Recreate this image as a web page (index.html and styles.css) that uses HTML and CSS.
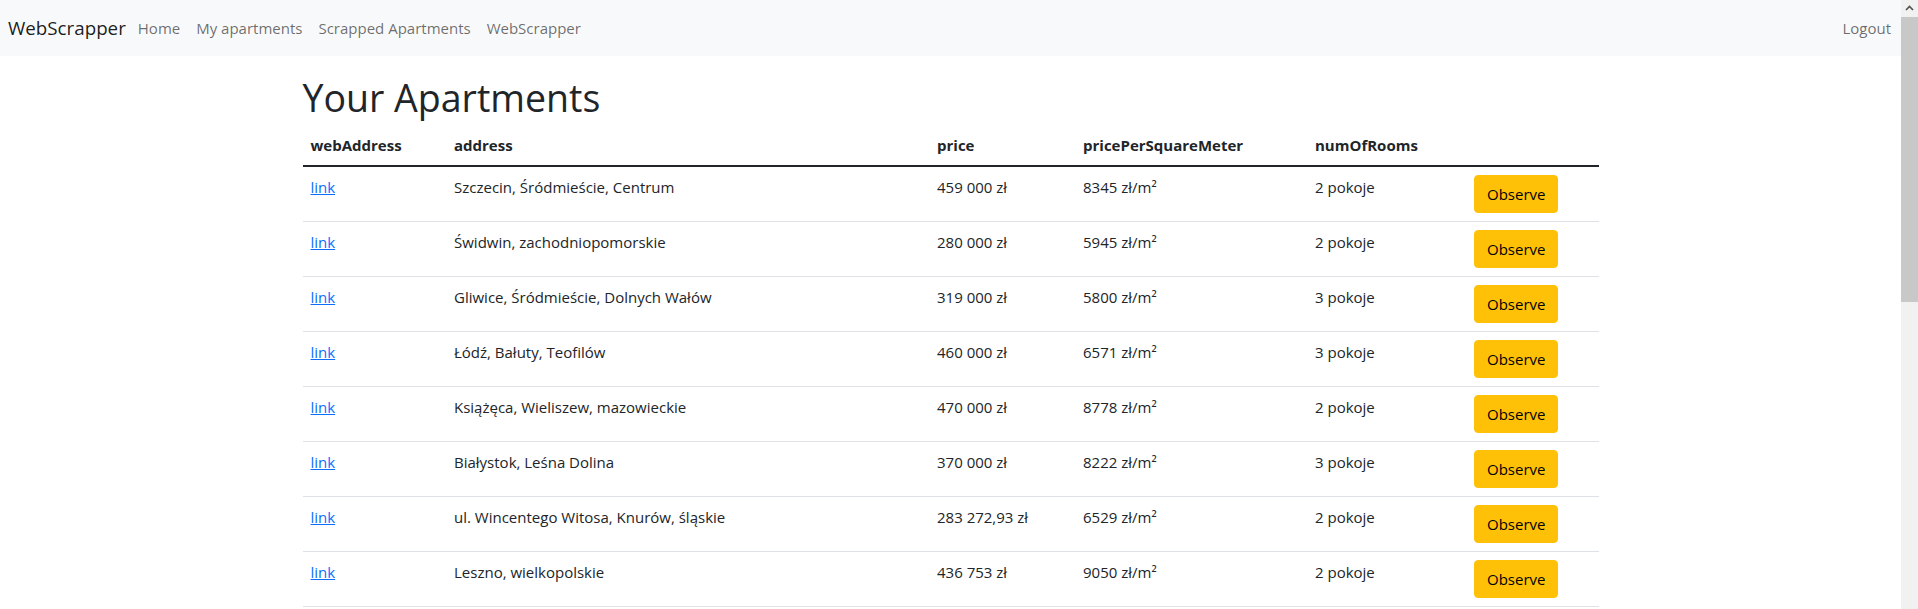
FILE: index.html
```html
<!DOCTYPE html>
<html lang="pl">
<head>
<meta charset="utf-8">
<title>WebScrapper</title>
<link rel="stylesheet" href="styles.css">
</head>
<body>
<div class="page">
  <nav class="navbar">
    <a class="brand" href="#">WebScrapper</a>
    <ul class="nav-list">
      <li><a class="nav-link" href="#">Home</a></li>
      <li><a class="nav-link" href="#">My apartments</a></li>
      <li><a class="nav-link" href="#">Scrapped Apartments</a></li>
      <li><a class="nav-link" href="#">WebScrapper</a></li>
    </ul>
    <ul class="nav-list nav-right">
      <li><a class="nav-link" href="#">Logout</a></li>
    </ul>
  </nav>
  <div class="container">
    <main class="main">
      <h1 class="title">Your Apartments</h1>
      <table class="table">
        <colgroup>
          <col class="c-web"><col class="c-addr"><col class="c-price"><col class="c-ppsm"><col class="c-rooms"><col class="c-act">
        </colgroup>
        <thead>
          <tr><th>webAddress</th><th>address</th><th>price</th><th>pricePerSquareMeter</th><th>numOfRooms</th><th></th></tr>
        </thead>
        <tbody>
          <tr><td><a class="link" href="#">link</a></td><td>Szczecin, Śródmieście, Centrum</td><td>459 000 zł</td><td>8345 zł/m²</td><td>2 pokoje</td><td><button class="btn">Observe</button></td></tr>
          <tr><td><a class="link" href="#">link</a></td><td>Świdwin, zachodniopomorskie</td><td>280 000 zł</td><td>5945 zł/m²</td><td>2 pokoje</td><td><button class="btn">Observe</button></td></tr>
          <tr><td><a class="link" href="#">link</a></td><td>Gliwice, Śródmieście, Dolnych Wałów</td><td>319 000 zł</td><td>5800 zł/m²</td><td>3 pokoje</td><td><button class="btn">Observe</button></td></tr>
          <tr><td><a class="link" href="#">link</a></td><td>Łódź, Bałuty, Teofilów</td><td>460 000 zł</td><td>6571 zł/m²</td><td>3 pokoje</td><td><button class="btn">Observe</button></td></tr>
          <tr><td><a class="link" href="#">link</a></td><td>Książęca, Wieliszew, mazowieckie</td><td>470 000 zł</td><td>8778 zł/m²</td><td>2 pokoje</td><td><button class="btn">Observe</button></td></tr>
          <tr><td><a class="link" href="#">link</a></td><td>Białystok, Leśna Dolina</td><td>370 000 zł</td><td>8222 zł/m²</td><td>3 pokoje</td><td><button class="btn">Observe</button></td></tr>
          <tr><td><a class="link" href="#">link</a></td><td>ul. Wincentego Witosa, Knurów, śląskie</td><td>283 272,93 zł</td><td>6529 zł/m²</td><td>2 pokoje</td><td><button class="btn">Observe</button></td></tr>
          <tr><td><a class="link" href="#">link</a></td><td>Leszno, wielkopolskie</td><td>436 753 zł</td><td>9050 zł/m²</td><td>2 pokoje</td><td><button class="btn">Observe</button></td></tr>
        </tbody>
      </table>
    </main>
  </div>
</div>
<div class="scrollbar">
  <div class="sb-arrow">
    <svg width="17" height="17" viewBox="0 0 17 17"><polyline points="5,10 8.5,6.5 12,10" fill="none" stroke="#505050" stroke-width="1.6"/></svg>
  </div>
  <div class="sb-thumb"></div>
</div>
</body>
</html>
```
FILE: styles.css
```css
*, *::before, *::after {
  box-sizing: border-box;
}
html, body {
  margin: 0;
  padding: 0;
  height: 100%;
}
body {
  display: flex;
  overflow: hidden;
  font-family: "Open Sans", "Noto Sans", "DejaVu Sans", sans-serif;
  font-size: 15px;
  line-height: 24px;
  color: #212529;
  background: #fff;
}
.page {
  flex: 1;
  min-width: 0;
  overflow: hidden;
}
.navbar {
  display: flex;
  align-items: center;
  height: 56px;
  padding: 8px 2px 8px 8px;
  background: #f8f9fa;
}
.brand {
  font-size: 18.75px;
  line-height: 30px;
  padding: 5px 0;
  margin-right: 4px;
  color: rgba(0, 0, 0, .9);
  text-decoration: none;
  white-space: nowrap;
}
.nav-list {
  display: flex;
  list-style: none;
  margin: 0;
  padding: 0;
}
.nav-right {
  margin-left: auto;
}
.nav-link {
  display: block;
  padding: 8px 8px;
  color: rgba(0, 0, 0, .58);
  text-decoration: none;
  white-space: nowrap;
}
.container {
  max-width: 1320px;
  margin: 0 auto;
  padding: 0 12px;
}
.main {
  padding-top: 18px;
}
.title {
  margin: 0 0 3px;
  font-size: 37.5px;
  line-height: 48px;
  font-weight: 400;
}
.table {
  width: 100%;
  table-layout: fixed;
  border-collapse: separate;
  border-spacing: 0;
}
.c-web { width: 143.5px; }
.c-addr { width: 483px; }
.c-price { width: 146px; }
.c-ppsm { width: 232px; }
.c-rooms { width: 159px; }
.c-act { width: 132.5px; }
.table th {
  text-align: left;
  font-weight: 700;
  padding: 8px;
  border-bottom: 2px solid #212529;
  white-space: nowrap;
}
.table td {
  padding: 8px;
  vertical-align: top;
  border-bottom: 1px solid #dee2e6;
  white-space: nowrap;
}
.link {
  color: #0d6efd;
  text-decoration: underline;
}
.btn {
  display: inline-block;
  font-family: inherit;
  font-size: 15px;
  line-height: 24px;
  padding: 6px 12px;
  color: #000;
  background: #ffc107;
  border: 1px solid #ffc107;
  border-radius: 4px;
  cursor: pointer;
}
.scrollbar {
  flex: 0 0 17px;
  width: 17px;
  height: 100%;
  background: #f1f1f1;
  display: flex;
  flex-direction: column;
}
.sb-arrow {
  height: 17px;
  flex: 0 0 17px;
}
.sb-arrow svg {
  display: block;
}
.sb-thumb {
  height: 285px;
  background: #c8c8c8;
}
```
